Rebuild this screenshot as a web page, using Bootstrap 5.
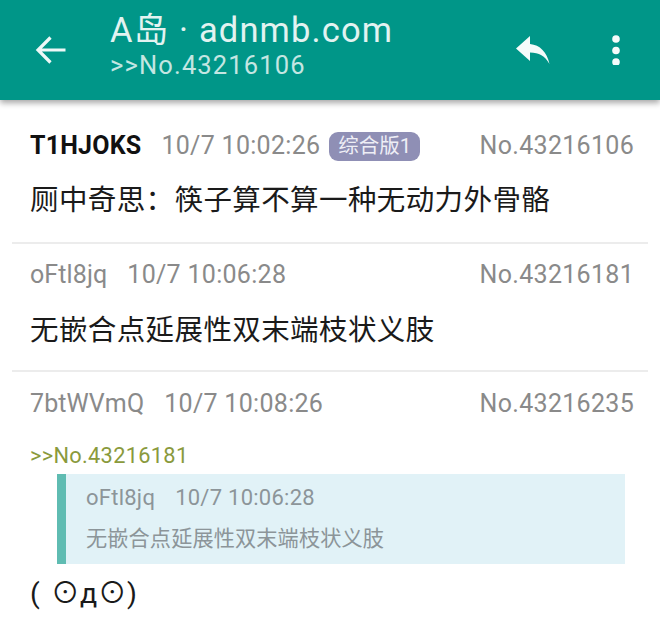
<!doctype html>
<html lang="zh"><head><meta charset="utf-8">
<link href="https://cdn.jsdelivr.net/npm/bootstrap@5.3.0/dist/css/bootstrap.min.css" rel="stylesheet">
<style>
html,body{height:631px;overflow:hidden}
body{background:#fff;font-family:Roboto,"Noto Sans CJK SC",sans-serif;color:#111}
.appbar{height:100px;background:#009688;color:#fff;box-shadow:0 3px 6px rgba(0,0,0,.35);position:relative;z-index:2;padding-left:35px;padding-right:39px}
.appbar svg{display:block;flex:none}
.titles{margin-left:43px;margin-top:-9px}
.t1{font-size:34.5px;line-height:38px;letter-spacing:1.15px;color:#e2f3f1}
.t2{font-size:25.5px;line-height:32px;letter-spacing:1.15px;color:#c4e6e2;margin-top:0}
.acts{gap:61px}
.post{padding:0 26px 0 30px;margin:0}
.metaln{font-size:25px;line-height:32px;color:#8a8a8a;letter-spacing:.3px}
.uid{margin-right:20px;letter-spacing:.1px}
.uid-b{font-weight:700;color:#111;font-size:25px;margin-right:20px;letter-spacing:.2px}
.tagpill{background:#8f8fb5;color:#eeeef5;font-size:20.5px;line-height:29px;height:29px;padding:0 9px;border-radius:9px;margin-left:9px;letter-spacing:0}
.body1{font-size:28.5px;line-height:38px;letter-spacing:.4px;color:#1a1a1a}
.rule{height:2px;background:#ececec;margin:0 12px}
.p1{padding-top:30px;height:142px}
.p1 .body1{margin-top:20px}
.p2{height:126px;padding-top:15px}
.p2 .body1{margin-top:21px}
.p3{padding-top:16px}
.ref{font-size:21.8px;line-height:28px;color:#8a9a3c;margin-top:22px;letter-spacing:.3px}
.quote{margin:4px 9px 0 27px;height:90px;background:#e1f2f7;border-left:9px solid #5fbcb2;padding:10px 0 0 20px;color:#8c9599}
.q1{font-size:22px;line-height:28px;letter-spacing:.25px}
.q1 span{margin-right:20px}
.q2{font-size:21.2px;line-height:28px;margin-top:13px;letter-spacing:.1px}
.face{font-size:28.5px;line-height:36px;margin-top:12px;color:#1a1a1a;letter-spacing:.6px;word-spacing:3px}
</style></head><body>
<div class="appbar d-flex align-items-center">
<svg width="32" height="32" viewBox="0 0 32 32" fill="none" stroke="#eef8f7" stroke-width="3.2"><path d="M30.5 16H3.5M15.5 3.500 3 16l12.500 12.500"/></svg>
<div class="titles flex-grow-1"><div class="t1">A岛 · adnmb.com</div><div class="t2">&gt;&gt;No.43216106</div></div>
<div class="acts d-flex align-items-center">
<svg width="34" height="28" viewBox="0 0 34 28" fill="#f4fbfa"><path d="M14 0v8c10 1 17 8 19.500 20C29 20 23 16.500 14 16.500V25L0 12.500Z"/></svg>
<svg width="10" height="30" viewBox="0 0 10 30" fill="#f4fbfa"><circle cx="5" cy="4" r="3.800"/><circle cx="5" cy="15.500" r="3.800"/><circle cx="5" cy="27" r="3.800"/></svg>
</div></div>
<div class="post p1">
<div class="metaln d-flex align-items-center"><span class="uid-b">T1HJOKS</span><span>10/7 10:02:26</span><span class="tagpill">综合版1</span><span class="ms-auto">No.43216106</span></div>
<div class="body1">厕中奇思：筷子算不算一种无动力外骨骼</div>
</div>
<div class="rule"></div>
<div class="post p2">
<div class="metaln d-flex"><span class="uid">oFtl8jq</span><span>10/7 10:06:28</span><span class="ms-auto">No.43216181</span></div>
<div class="body1">无嵌合点延展性双末端枝状义肢</div>
</div>
<div class="rule"></div>
<div class="post p3">
<div class="metaln d-flex"><span class="uid">7btWVmQ</span><span>10/7 10:08:26</span><span class="ms-auto">No.43216235</span></div>
<div class="ref">&gt;&gt;No.43216181</div>
<div class="quote"><div class="q1"><span>oFtl8jq</span>10/7 10:06:28</div><div class="q2">无嵌合点延展性双末端枝状义肢</div></div>
<div class="face">( ⊙д⊙)</div>
</div>
</body></html>
